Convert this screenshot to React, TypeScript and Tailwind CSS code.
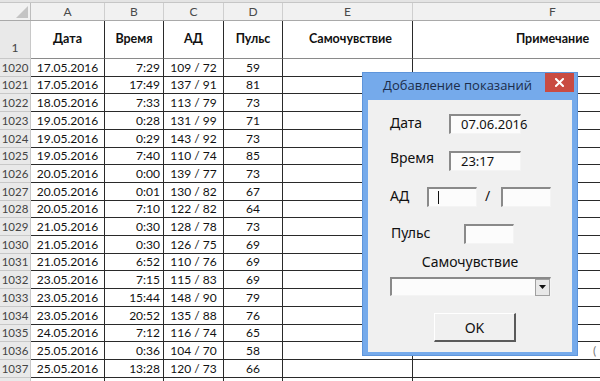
import React from "react";

const rows: [string, string, string, string, string][] = [
  ["1020", "17.05.2016", "7:29", "109 / 72", "59"],
  ["1021", "17.05.2016", "17:49", "137 / 91", "81"],
  ["1022", "18.05.2016", "7:33", "113 / 79", "73"],
  ["1023", "19.05.2016", "0:28", "131 / 99", "71"],
  ["1024", "19.05.2016", "0:29", "143 / 92", "73"],
  ["1025", "19.05.2016", "7:40", "110 / 74", "85"],
  ["1026", "20.05.2016", "0:00", "139 / 77", "73"],
  ["1027", "20.05.2016", "0:01", "130 / 82", "67"],
  ["1028", "20.05.2016", "7:10", "122 / 82", "64"],
  ["1029", "21.05.2016", "0:30", "128 / 78", "73"],
  ["1030", "21.05.2016", "0:30", "126 / 75", "69"],
  ["1031", "21.05.2016", "6:52", "110 / 76", "69"],
  ["1032", "23.05.2016", "7:15", "115 / 83", "69"],
  ["1033", "23.05.2016", "15:44", "148 / 90", "79"],
  ["1034", "23.05.2016", "20:52", "135 / 88", "76"],
  ["1035", "24.05.2016", "7:12", "116 / 74", "65"],
  ["1036", "25.05.2016", "0:36", "104 / 70", "58"],
  ["1037", "25.05.2016", "13:28", "120 / 73", "66"],
  ["", "", "", "", ""],
];

const heights = [
  "h-[18px]", "h-[17px]", "h-[18px]", "h-[18px]", "h-[18px]", "h-[17px]",
  "h-[18px]", "h-[18px]", "h-[17px]", "h-[18px]", "h-[18px]", "h-[17px]",
  "h-[18px]", "h-[18px]", "h-[18px]", "h-[17px]", "h-[18px]", "h-[18px]",
  "h-[18px]",
];

const cell = "shrink-0 flex items-center border-r border-b border-[#2a2a2a]";

function Sunken({ className, children }: { className: string; children?: React.ReactNode }) {
  return (
    <div
      className={`absolute bg-[#fcfcfc] border-t-2 border-l-2 border-t-[#8a8a8a] border-l-[#8a8a8a] border-b border-r border-b-[#f4f4f4] border-r-[#f4f4f4] flex items-center ${className}`}
    >
      {children}
    </div>
  );
}

export default function App() {
  return (
    <div
      className="relative w-[600px] h-[381px] overflow-hidden bg-white text-[#111]"
      style={{ fontFamily: "Lato, 'Open Sans', sans-serif" }}
    >
      {/* top strip */}
      <div className="h-[3px] bg-[#e4e4e4] border-b border-[#c6c6c6]" />
      {/* column letters */}
      <div className="flex h-[18px] bg-[#f1f1f1] border-b border-[#a9a9a9] text-[12px] text-[#4a4a4a]">
        <div className="relative w-[31px] shrink-0 border-r border-[#bdbdbd]">
          <svg className="absolute left-[16px] top-[3px]" width="12" height="12" viewBox="0 0 12 12">
            <polygon points="12,0 12,12 0,12" fill="#c4c4c4" />
          </svg>
        </div>
        <div className="w-[74px] shrink-0 border-r border-[#cfcfcf] flex items-center justify-center">A</div>
        <div className="w-[59px] shrink-0 border-r border-[#cfcfcf] flex items-center justify-center">B</div>
        <div className="w-[60px] shrink-0 border-r border-[#cfcfcf] flex items-center justify-center">C</div>
        <div className="w-[59px] shrink-0 border-r border-[#cfcfcf] flex items-center justify-center">D</div>
        <div className="w-[130px] shrink-0 border-r border-[#cfcfcf] flex items-center justify-center">E</div>
        <div className="w-[280px] shrink-0 border-r border-[#cfcfcf] flex items-center justify-center">F</div>
      </div>
      {/* header row 1 */}
      <div className="flex h-[38px] text-[12.5px] font-bold">
        <div className="w-[31px] shrink-0 bg-[#e9e9e9] border-r border-[#b5b5b5] border-b border-[#c8c8c8] flex items-end justify-center pb-[1px] text-[12px] font-normal text-[#444]">
          1
        </div>
        <div className={`${cell} w-[74px] justify-center border-b-[#8a8a8a]`}>Дата</div>
        <div className={`${cell} w-[59px] justify-center border-b-[#8a8a8a]`}>Время</div>
        <div className={`${cell} w-[60px] justify-center border-b-[#8a8a8a]`}>АД</div>
        <div className={`${cell} w-[59px] justify-center border-b-[#8a8a8a]`}>Пульс</div>
        <div className={`${cell} w-[130px] justify-center pl-[6px] border-b-[#8a8a8a]`}>Самочувствие</div>
        <div className={`${cell} w-[280px] justify-center border-b-[#8a8a8a]`}>Примечание</div>
      </div>
      {/* data rows */}
      {rows.map((r, i) => (
        <div key={i} className={`flex ${heights[i]} text-[12px] leading-none`}>
          <div className="w-[31px] shrink-0 bg-[#e9e9e9] border-r border-[#b5b5b5] border-b border-[#c8c8c8] flex items-center justify-center text-[11.5px] text-[#444]">
            {r[0]}
          </div>
          <div className={`${cell} w-[74px] justify-center`}>{r[1]}</div>
          <div className={`${cell} w-[59px] justify-end pr-[3px]`}>{r[2]}</div>
          <div className={`${cell} w-[60px] justify-center`}>{r[3]}</div>
          <div className={`${cell} w-[59px] justify-center`}>{r[4]}</div>
          <div className={`${cell} w-[130px]`} />
          <div className={`${cell} w-[280px] pl-[180px] text-[#777]`}>{i === 16 ? "(" : ""}</div>
        </div>
      ))}

      {/* dialog */}
      <div className="absolute left-[362px] top-[72px] w-[216px] h-[284px] bg-[#75aaeb] border border-[#5e95db]">
        <div
          className="absolute left-[20px] top-[6px] text-[13px] text-[#1c2d4a] leading-none"
          style={{ fontFamily: "'Open Sans', 'Noto Sans', sans-serif" }}
        >
          Добавление показаний
        </div>
        <div className="absolute left-[182px] top-0 w-[29px] h-[19px] bg-[#c94b42] flex items-center justify-center">
          <svg width="9" height="9" viewBox="0 0 9 9">
            <path d="M1 1 L8 8 M8 1 L1 8" stroke="#fff" strokeWidth="2" strokeLinecap="square" />
          </svg>
        </div>
        {/* client area */}
        <div
          className="absolute left-[5px] top-[27px] w-[204px] h-[252px] bg-[#f0f0f0] text-[14px] text-[#111]"
          style={{ fontFamily: "'Noto Sans', 'DejaVu Sans', sans-serif" }}
        >
          <div className="absolute left-[22px] top-[16px] leading-none">Дата</div>
          <Sunken className="left-[81px] top-[14px] w-[72px] h-[20px] pl-[10px] text-[13px]">07.06.2016</Sunken>

          <div className="absolute left-[22px] top-[51px] leading-none">Время</div>
          <Sunken className="left-[81px] top-[51px] w-[72px] h-[20px] pl-[10px] text-[13px]">23:17</Sunken>

          <div className="absolute left-[22px] top-[89px] leading-none">АД</div>
          <Sunken className="left-[59px] top-[87px] w-[50px] h-[20px]">
            <div className="ml-[9px] w-px h-[13px] bg-[#111]" />
          </Sunken>
          <div className="absolute left-[117px] top-[89px] leading-none">/</div>
          <Sunken className="left-[133px] top-[87px] w-[50px] h-[20px]" />

          <div className="absolute left-[23px] top-[126px] leading-none">Пульс</div>
          <Sunken className="left-[96px] top-[124px] w-[50px] h-[20px]" />

          <div className="absolute left-0 top-[155px] w-[204px] text-center leading-none">Самочувствие</div>
          <Sunken className="left-[22px] top-[177px] w-[161px] h-[19px] justify-end">
            <div className="w-[15px] h-[17px] bg-[#e8e8e8] border border-[#a0a0a0] flex items-center justify-center">
              <svg width="7" height="4" viewBox="0 0 7 4">
                <polygon points="0,0 7,0 3.5,4" fill="#111" />
              </svg>
            </div>
          </Sunken>

          <div className="absolute left-[66px] top-[213px] w-[82px] h-[29px] bg-[#f0f0f0] border-t border-l border-t-white border-l-white border-b-2 border-r-2 border-b-[#5a5a5a] border-r-[#5a5a5a] flex items-center justify-center text-[14px]">
            OK
          </div>
        </div>
      </div>
    </div>
  );
}
